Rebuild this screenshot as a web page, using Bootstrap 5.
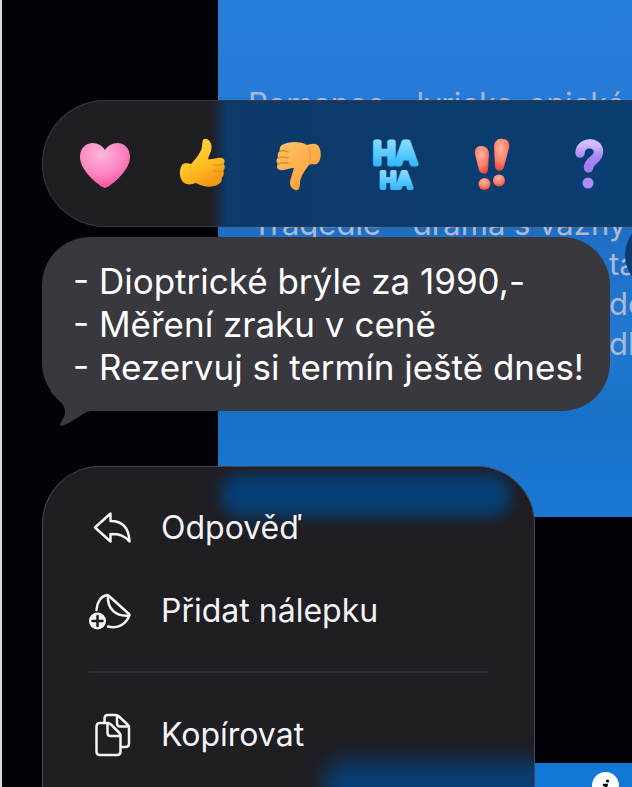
<!DOCTYPE html>
<html lang="cs" data-bs-theme="dark">
<head>
<meta charset="utf-8">
<meta name="viewport" content="width=device-width, initial-scale=1">
<title>Zprávy</title>
<link href="https://cdn.jsdelivr.net/npm/bootstrap@5.3.0/dist/css/bootstrap.min.css" rel="stylesheet">
<style>
  body { background: #030208; font-family: Inter, "Liberation Sans", sans-serif; }
  .chat-screen { border-left: 2px solid #dcdce0; }
  .thread { position: absolute; inset: 0; padding-left: 216px; }
  .sent-note { height: 517px; padding: 84px 0 0 30px; font-size: 31px; line-height: 40px; color: #abb9d6;
    background: linear-gradient(#267dd9 0, #267bd6 90px, #1e6ec4 230px, #2179d2 340px, #1870c6 415px, #1979d5 100%); }
  .note-line { padding-left: 4px; }
  .note-tail { padding-left: 361px; }
  .sent-next { height: 24px; margin-top: auto; background: #1278d8; }
  .side-action { position: absolute; top: 219px; right: -65px; width: 72px; height: 72px; background: #0a3c70; }
  .info-action { position: absolute; right: 13px; bottom: -12px; width: 27px; height: 27px; background: #fff; color: #000; }
  .overlay-stack { position: relative; padding: 100px 0 0 40px; }
  .reactions { height: 127px; padding-left: 13px; border: 1px solid #39393f; border-right: 0; border-radius: 63px 0 0 63px;
    background: linear-gradient(90deg, #1f1e23 168px, #0c3a69 184px, #0a3d72 100%); }
  .reactions .btn { flex: 0 0 97px; }
  .message { margin: 10px 22px 0 0; padding: 23px 22px 22px 31px; border-radius: 48px; background: #39383e; color: #fff;
    font-size: 35px; line-height: 43px; position: relative; }
  .message-tail { position: absolute; left: 8px; bottom: -16px; }
  .menu { width: 493px; max-width: 100%; margin-top: 55px; padding-top: 19px; border: 1px solid #47464d; border-bottom: 0;
    border-radius: 58px 58px 0 0; background: #1f1e23; position: relative; overflow: hidden; }
  .menu-row { height: 83px; padding: 0 46px; gap: 26px; font-size: 32px; line-height: 40px; color: #f4f4f6; position: relative; }
  .menu-row svg { flex: 0 0 46px; }
  .menu-rule { margin: 19px 46px 20px; border-top: 2px solid #2f2e34; }
  .glow { position: absolute; background: #073e73; filter: blur(7px); border-radius: 20px; }
  .glow-top { top: 7px; left: 178px; right: 23px; height: 43px; }
  .glow-bottom { bottom: -30px; left: 282px; right: -30px; height: 56px; filter: blur(10px); }
</style>
<script src="https://cdn.jsdelivr.net/npm/bootstrap@5.3.0/dist/js/bootstrap.bundle.min.js"></script>
</head>
<body>
<main class="chat-screen position-relative vh-100 overflow-hidden d-flex flex-column">
  <section class="thread d-flex flex-column">
    <div class="sent-note text-nowrap overflow-hidden flex-shrink-0">
      <div>Romance - lyricko-epická</div>
      <div>&nbsp;</div>
      <div>&nbsp;</div>
      <div class="note-line">Tragédie - drama s vážný</div>
      <div class="note-tail">ta</div>
      <div class="note-tail">do</div>
      <div class="note-tail">dl</div>
    </div>
    <div class="sent-next"></div>
  </section>
  <button class="side-action btn rounded-circle border-0 p-0" aria-label="Další"></button>

  <div class="overlay-stack d-flex flex-column flex-grow-1">
    <div class="reactions d-flex align-items-center overflow-hidden flex-shrink-0">
      <button class="btn border-0 p-0" aria-label="Srdce">
        <svg width="60" height="60" viewBox="0 0 60 60">
          <defs><radialGradient id="heart" cx=".42" cy=".25" r=".85"><stop offset="0" stop-color="#ffb5dc"/><stop offset=".55" stop-color="#fb83bf"/><stop offset="1" stop-color="#fb3f92"/></radialGradient></defs>
          <path d="M30 54C27 54 5 38 5 23C5 14 11 9 17.500 9C23 9 27.500 12 30 16C32.500 12 37 9 42.500 9C49 9 55 14 55 23C55 38 33 54 30 54Z" fill="url(#heart)"/>
        </svg>
      </button>
      <button class="btn border-0 p-0" aria-label="Palec nahoru">
        <svg width="60" height="60" viewBox="0 0 60 60">
          <defs><linearGradient id="up" x1="0" y1="0" x2=".5" y2="1"><stop offset="0" stop-color="#ffd94b"/><stop offset=".6" stop-color="#ffc226"/><stop offset="1" stop-color="#f49a13"/></linearGradient></defs>
          <path d="M31 6C33 3 39 6 39.500 12C40 17 37 21 36 25C41 26 45 23 50 24C53 25 53.500 28 51.500 30C53.500 32 53 35 51 36.500C52.500 39 52 42 49.500 43.500C50.500 46 49 49 46 50.500C40 54 31 53 24 49C19 51 14 51 11 48C7 43 7 36 10 31C13 28 17 30 19 30C24 25 28 19 29.500 15C30.500 11 30 8 31 6Z" fill="url(#up)"/>
          <path d="M51.500 30C48 32 45 31 42 31M51 36.500C48 38 45 37 42 37M49.500 43.500C46 45 44 44 42 43" fill="none" stroke="#e8961c" stroke-width="1.500" stroke-linecap="round"/>
          <path d="M18 32C20 37 18 43 22 48" fill="none" stroke="#f3a91d" stroke-width="2" opacity=".5"/>
        </svg>
      </button>
      <button class="btn border-0 p-0" aria-label="Palec dolů">
        <svg width="60" height="60" viewBox="0 0 60 60">
          <defs><linearGradient id="down" x1="0" y1="0" x2="1" y2="1"><stop offset="0" stop-color="#ffc369"/><stop offset=".6" stop-color="#ffac47"/><stop offset="1" stop-color="#f58617"/></linearGradient></defs>
          <path d="M13 11C20 7 32 7 38 11C42 10 48 8 50 13C53 18 52 26 49 29C46 32 42 29 40 31C36 36 32 42 31 48C31 54 30 57 26 56C21 54 20 49 22 44L25 34C20 34 16 37 11 36C8 35 7 33 9 30C7 28 7 25 9 24C8 21 9 18 11 17C10 15 11 12 13 11Z" fill="url(#down)"/>
          <path d="M11 17C14 16 17 17 19 18M9 24C13 22 16 23 19 24M9 30C13 28 16 29 19 29" fill="none" stroke="#e78a24" stroke-width="1.500" stroke-linecap="round"/>
          <path d="M40 13C42 19 42 25 39 30" fill="none" stroke="#ee902c" stroke-width="1.500" opacity=".6"/>
        </svg>
      </button>
      <button class="btn border-0 p-0" aria-label="Haha">
        <svg width="60" height="60" viewBox="0 0 60 60">
          <defs><linearGradient id="laugh" x1="0" y1="0" x2="0" y2="1"><stop offset="0" stop-color="#9be3ff"/><stop offset=".5" stop-color="#5ecbff"/><stop offset="1" stop-color="#1cadfa"/></linearGradient></defs>
          <g fill="url(#laugh)" stroke="url(#laugh)" stroke-linejoin="round" text-anchor="middle" font-family="Inter, sans-serif" font-weight="500">
            <text x="29" y="30" font-size="30" stroke-width="5">HA</text>
            <text x="30" y="54" font-size="22" stroke-width="4">HA</text>
          </g>
        </svg>
      </button>
      <button class="btn border-0 p-0" aria-label="Vykřičníky">
        <svg width="60" height="60" viewBox="0 0 60 60">
          <defs><radialGradient id="bang" cx=".45" cy=".3" r=".75"><stop offset="0" stop-color="#ffb69e"/><stop offset=".6" stop-color="#ff7d68"/><stop offset="1" stop-color="#e93a36"/></radialGradient></defs>
          <g fill="url(#bang)">
            <path d="M12 20C11 15 14 12 18 12C23 12 26 15 26 20L25 36C24.500 41 18 41 16 36Z"/>
            <path d="M31 13C31 7 35 4 40 5C45 5 47 9 46 14L41 33C39.500 38 33 38 32 33Z"/>
            <circle cx="21.500" cy="50" r="6"/><circle cx="36" cy="46.500" r="6"/>
          </g>
        </svg>
      </button>
      <button class="btn border-0 p-0" aria-label="Otazník">
        <svg width="60" height="60" viewBox="0 0 60 60">
          <defs><linearGradient id="ask" x1="0" y1="0" x2="0" y2="1"><stop offset="0" stop-color="#d5bdff"/><stop offset=".5" stop-color="#ac87f5"/><stop offset="1" stop-color="#a27cec"/></linearGradient></defs>
          <path d="M20 19C20.500 7 38.500 7 38.500 18C38.500 26 28.500 26 28.500 34" fill="none" stroke="url(#ask)" stroke-width="9.500" stroke-linecap="round"/>
          <circle cx="28" cy="49" r="5.500" fill="#ae8af4"/>
        </svg>
      </button>
    </div>

    <div class="message flex-shrink-0">
      <div>- Dioptrické brýle za 1990,-</div>
      <div>- Měření zraku v ceně</div>
      <div>- Rezervuj si termín ještě dnes!</div>
      <svg class="message-tail" width="60" height="36" viewBox="0 0 60 36" aria-hidden="true"><path d="M0 0C8 10 15 12 15 21C15 27 10 31 10 34C11 38 29 26 33 23Q37 20 42 20L60 20V0Z" fill="#39383e"/></svg>
    </div>

    <nav class="menu flex-grow-1" aria-label="Akce zprávy">
      <div class="glow glow-top"></div>
      <div class="glow glow-bottom"></div>
      <button class="menu-row btn border-0 rounded-0 d-flex align-items-center w-100 text-start">
        <svg height="46" viewBox="0 0 46 46" fill="none" stroke="currentColor" stroke-width="2.500" stroke-linejoin="round"><path d="M6 22.500L21.500 8.500V16C34 16 40 24 40.500 36.500C35 30 30 29 21.500 29V36.500Z"/></svg>
        <span>Odpověď</span>
      </button>
      <button class="menu-row btn border-0 rounded-0 d-flex align-items-center w-100 text-start">
        <svg height="46" viewBox="0 0 46 46" fill="none" stroke="currentColor" stroke-width="2.500" stroke-linecap="round" stroke-linejoin="round"><path d="M7.500 22C8 14 12 8 18 7Q19 7 20 8L40 26Q41 27 40 28.500C36 37 28 41 19 38.500M19 7.500C18 21 27 29 40.500 27.500"/><circle cx="8.500" cy="33" r="8.500" fill="currentColor" stroke="none"/><path d="M8.500 28V38M3.500 33H13.500" stroke="#1f1e23"/></svg>
        <span>Přidat nálepku</span>
      </button>
      <div class="menu-rule"></div>
      <button class="menu-row btn border-0 rounded-0 d-flex align-items-center w-100 text-start">
        <svg height="46" viewBox="0 0 46 46" fill="none" stroke="currentColor" stroke-width="2.500" stroke-linejoin="round"><path d="M11 11H18.500Q20.500 11 22 12.500L30 20.500Q31.500 22 31.500 24V39.500Q31.500 43 28 43H11Q7.500 43 7.500 39.500V14.500Q7.500 11 11 11ZM18.500 11V21Q18.500 24 21.500 24H31M15.500 11V6.500Q15.500 3 19 3H26.500Q28.500 3 30 4.500L38.500 12.500Q40 14 40 16V31.500Q40 35 36.500 35H32M28 3V11Q28 14.500 31 14.500H39.500"/></svg>
        <span>Kopírovat</span>
      </button>
    </nav>
  </div>

  <button class="info-action btn rounded-circle border-0 p-0 d-flex" aria-label="Informace">
    <svg width="27" height="27" viewBox="0 0 27 27"><circle cx="15.500" cy="9" r="1.600"/><path d="M11 13H14.500L12.500 20H15" fill="none" stroke="#000" stroke-width="2.500"/></svg>
  </button>
</main>
</body>
</html>
